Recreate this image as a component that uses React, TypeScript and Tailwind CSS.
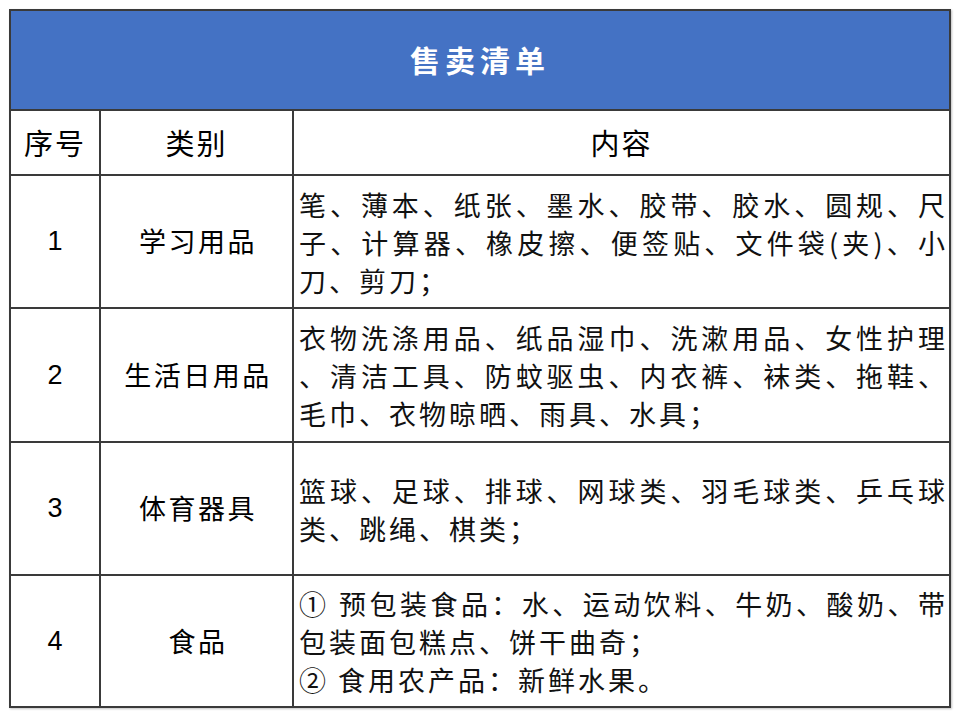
const cjk = "font-['Noto_Sans_CJK_SC','Noto_Sans',sans-serif]"

type Row = {
  no: string
  category: string
  // each line, with flag for justified
  lines: Array<{ text: string; justify?: boolean }>
}

const rows: Row[] = [
  {
    no: '1',
    category: '学习用品',
    lines: [
      { text: '笔、薄本、纸张、墨水、胶带、胶水、圆规、尺', justify: true },
      { text: '子、计算器、橡皮擦、便签贴、文件袋(夹)、小', justify: true },
      { text: '刀、剪刀；' },
    ],
  },
  {
    no: '2',
    category: '生活日用品',
    lines: [
      { text: '衣物洗涤用品、纸品湿巾、洗漱用品、女性护理', justify: true },
      { text: '、清洁工具、防蚊驱虫、内衣裤、袜类、拖鞋、', justify: true },
      { text: '毛巾、衣物晾晒、雨具、水具；' },
    ],
  },
  {
    no: '3',
    category: '体育器具',
    lines: [
      { text: '篮球、足球、排球、网球类、羽毛球类、乒乓球', justify: true },
      { text: '类、跳绳、棋类；' },
    ],
  },
  {
    no: '4',
    category: '食品',
    lines: [
      { text: '① 预包装食品：水、运动饮料、牛奶、酸奶、带', justify: true },
      { text: '包装面包糕点、饼干曲奇；' },
      { text: '② 食用农产品：新鲜水果。' },
    ],
  },
]

export default function App() {
  return (
    <div className={`w-[960px] h-[718px] bg-white pt-[9px] pl-[9px] ${cjk}`}>
      <div className="grid w-[942px] grid-cols-[88px_191px_655px] grid-rows-[98px_63px_131px_132px_131px_130px] gap-[2px] bg-[#3a3a3a] p-[2px] shadow-[1px_1px_2px_rgba(0,0,0,0.25)]">
        {/* Title */}
        <div className="col-span-3 flex items-center justify-center bg-[#4472c4] pb-[2px]">
          <span className="text-[30px] font-bold tracking-[5px] text-white leading-none">售卖清单</span>
        </div>

        {/* Header */}
        <div className="flex items-center justify-center bg-white text-[29px] tracking-[2px] text-black">序号</div>
        <div className="flex items-center justify-center bg-white text-[29px] tracking-[2px] text-black">类别</div>
        <div className="flex items-center justify-center bg-white text-[29px] tracking-[2px] text-black">内容</div>

        {rows.map((r) => (
          <div key={r.no} className="contents">
            <div className="flex items-center justify-center bg-white font-['Liberation_Sans',Arial,sans-serif] text-[27px] text-black">
              {r.no}
            </div>
            <div className="flex items-center justify-center bg-white pl-[3px] text-[27px] tracking-[2.5px] text-black">
              {r.category}
            </div>
            <div className="flex flex-col justify-center bg-white pl-[5px] pr-[1px] pt-[2px] text-[27px] leading-[38px] tracking-[3px] text-[#111]">
              {r.lines.map((l, i) => (
                <div
                  key={i}
                  className={l.justify ? 'whitespace-nowrap text-justify [text-align-last:justify]' : 'whitespace-nowrap'}
                >
                  {l.text}
                </div>
              ))}
            </div>
          </div>
        ))}
      </div>
    </div>
  )
}
